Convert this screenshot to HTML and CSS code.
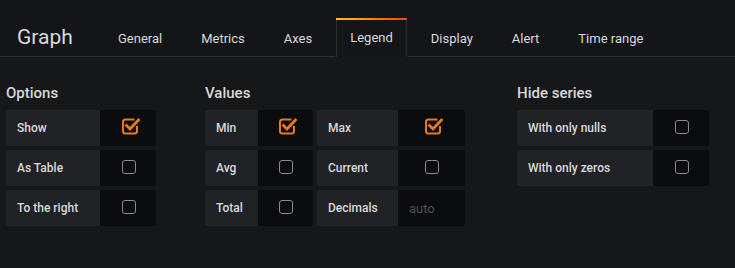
FILE: index.html
```html
<!DOCTYPE html>
<html>
<head>
<meta charset="utf-8">
<link rel="stylesheet" href="styles.css">
</head>
<body>
<div class="header">
  <div class="title">Graph</div>
  <div class="tabs">
    <div class="tab">General</div>
    <div class="tab">Metrics</div>
    <div class="tab">Axes</div>
    <div class="tab active">Legend</div>
    <div class="tab">Display</div>
    <div class="tab">Alert</div>
    <div class="tab">Time range</div>
  </div>
</div>
<div class="content">
  <div class="section sec-options">
    <div class="sec-title">Options</div>
    <div class="row">
      <div class="label w94">Show</div>
      <div class="cb w56"><svg class="chk" width="20" height="20" viewBox="0 0 20 20"><path d="M14.5 3.5 H5.5 A2.5 2.5 0 0 0 3 6 V15 A2.5 2.5 0 0 0 5.5 17.5 H14.5 A2.5 2.5 0 0 0 17 15 V10" fill="none" stroke="#eb7b18" stroke-width="2"/><path d="M6.5 9.5 L10 13 L18.5 4" fill="none" stroke="#eb7b18" stroke-width="2.8" stroke-linecap="square"/></svg></div>
    </div>
    <div class="row">
      <div class="label w94">As Table</div>
      <div class="cb w56"><span class="box"></span></div>
    </div>
    <div class="row">
      <div class="label w94">To the right</div>
      <div class="cb w56"><span class="box"></span></div>
    </div>
  </div>

  <div class="section sec-values">
    <div class="sec-title">Values</div>
    <div class="row">
      <div class="label w53">Min</div>
      <div class="cb w55"><svg class="chk" width="20" height="20" viewBox="0 0 20 20"><path d="M14.5 3.5 H5.5 A2.5 2.5 0 0 0 3 6 V15 A2.5 2.5 0 0 0 5.5 17.5 H14.5 A2.5 2.5 0 0 0 17 15 V10" fill="none" stroke="#eb7b18" stroke-width="2"/><path d="M6.5 9.5 L10 13 L18.5 4" fill="none" stroke="#eb7b18" stroke-width="2.8" stroke-linecap="square"/></svg></div>
      <div class="label w81 ml4">Max</div>
      <div class="cb w67"><svg class="chk" width="20" height="20" viewBox="0 0 20 20"><path d="M14.5 3.5 H5.5 A2.5 2.5 0 0 0 3 6 V15 A2.5 2.5 0 0 0 5.5 17.5 H14.5 A2.5 2.5 0 0 0 17 15 V10" fill="none" stroke="#eb7b18" stroke-width="2"/><path d="M6.5 9.5 L10 13 L18.5 4" fill="none" stroke="#eb7b18" stroke-width="2.8" stroke-linecap="square"/></svg></div>
    </div>
    <div class="row">
      <div class="label w53">Avg</div>
      <div class="cb w55"><span class="box"></span></div>
      <div class="label w81 ml4">Current</div>
      <div class="cb w67"><span class="box"></span></div>
    </div>
    <div class="row">
      <div class="label w53">Total</div>
      <div class="cb w55"><span class="box"></span></div>
      <div class="label w81 ml4">Decimals</div>
      <div class="input w67">auto</div>
    </div>
  </div>

  <div class="section sec-hide">
    <div class="sec-title">Hide series</div>
    <div class="row">
      <div class="label w136">With only nulls</div>
      <div class="cb w56"><span class="box"></span></div>
    </div>
    <div class="row">
      <div class="label w136">With only zeros</div>
      <div class="cb w56"><span class="box"></span></div>
    </div>
  </div>
</div>
</body>
</html>
```

FILE: styles.css
```css
html, body {
  margin: 0;
  padding: 0;
  background: #161719;
  font-family: Roboto, "Liberation Sans", sans-serif;
  color: #d8d9da;
  width: 735px;
  height: 268px;
  overflow: hidden;
}

.header {
  height: 56px;
  display: flex;
  align-items: flex-end;
  border-bottom: 1px solid #2e2f33;
  background: #141518;
}

.title {
  font-size: 21px;
  line-height: 24px;
  padding-left: 17px;
  width: 85px;
  margin-bottom: 7px;
  color: #d8d9da;
}

.tabs {
  display: flex;
  align-items: flex-end;
}

.tab {
  height: 36px;
  line-height: 36px;
  padding: 0 15px;
  margin-right: 7px;
  font-size: 13px;
  color: #d8d9da;
  border: 1px solid transparent;
  border-top: 2px solid transparent;
  border-bottom: none;
  margin-bottom: -1px;
  box-sizing: content-box;
}

.tab.active {
  border-color: #2e2f33;
  border-top: 2px solid transparent;
  border-image: linear-gradient(90deg, #fbc02d 0%, #f57c00 60%, #e64a19 100%) 2 0 0 0;
  background: #141518;
  position: relative;
  padding: 0 14px;
  height: 37px;
}

.tab.active::before,
.tab.active::after {
  content: "";
  position: absolute;
  top: 0;
  bottom: 0;
  width: 1px;
  background: #2e2f33;
}
.tab.active::before { left: 0; }
.tab.active::after { right: 0; }

.content {
  display: flex;
  padding: 27px 0 0 6px;
}

.section {
  display: flex;
  flex-direction: column;
}

.sec-options { margin-right: 49px; }
.sec-values { margin-right: 52px; }

.sec-title {
  font-size: 15px;
  line-height: 18px;
  font-weight: 500;
  margin-bottom: 8px;
  color: #d8d9da;
}

.row {
  display: flex;
  height: 36px;
  margin-bottom: 4px;
}

.label {
  background: #212226;
  font-size: 12px;
  font-weight: 500;
  line-height: 36px;
  padding-left: 11px;
  box-sizing: border-box;
  color: #d8d9da;
  border-radius: 2px 0 0 2px;
  white-space: nowrap;
}

.cb, .input {
  background: #0b0c0e;
  display: flex;
  align-items: center;
  justify-content: center;
  border-radius: 0 2px 2px 0;
}

.input {
  justify-content: flex-start;
  padding-left: 11px;
  box-sizing: border-box;
  font-size: 13px;
  color: #4f5054;
}

.box {
  width: 12px;
  height: 12px;
  border: 1.6px solid #8a8b8e;
  border-radius: 3px;
  margin-top: -3px;
  margin-left: 1px;
}

.chk {
  margin-left: 3px;
  margin-top: -4px;
}

.w53 { width: 53px; }
.w55 { width: 55px; }
.w56 { width: 56px; }
.w67 { width: 67px; }
.w81 { width: 81px; }
.w94 { width: 94px; }
.w136 { width: 136px; }
.ml4 { margin-left: 4px; }
```
